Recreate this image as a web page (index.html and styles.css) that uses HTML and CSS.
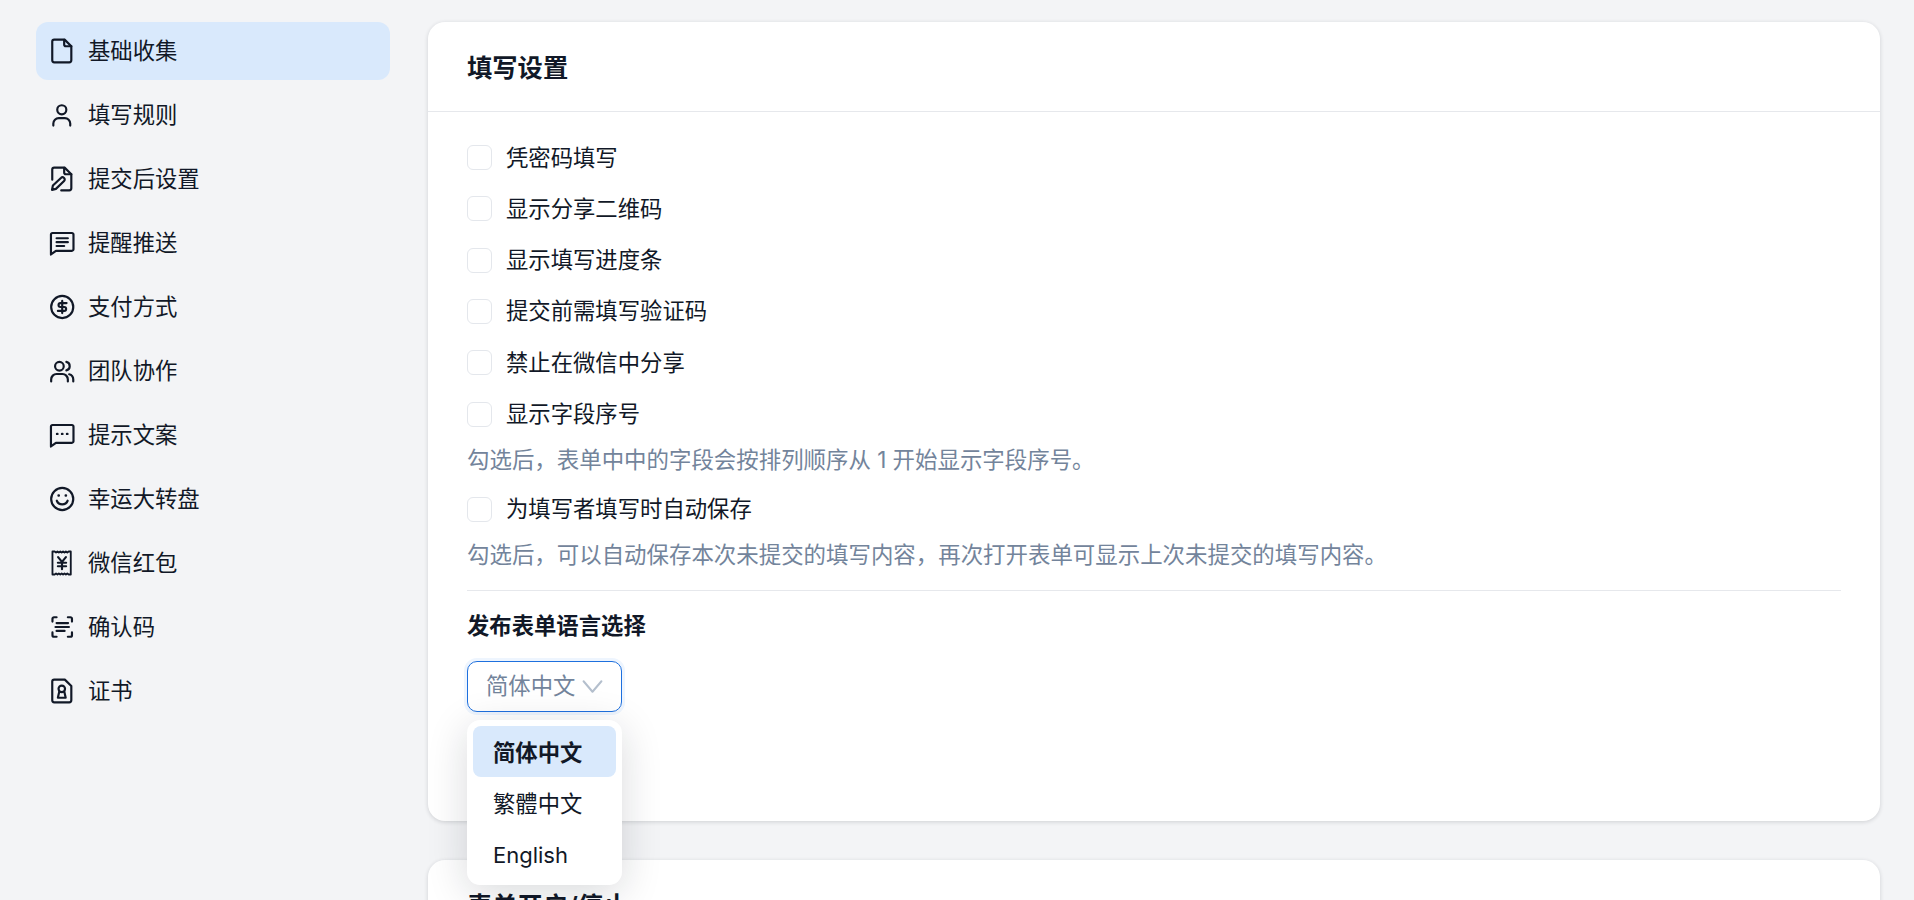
FILE: index.html
```html
<!DOCTYPE html>
<html lang="zh-CN">
<head>
<meta charset="utf-8">
<title>表单设置</title>
<link rel="stylesheet" href="styles.css">
</head>
<body>
<div class="page">
  <nav class="side">
    <a class="nav active"><svg class="ico" viewBox="0 0 24 24"><path d="M4.8 1.5h9.6l6.2 6.1v13a1.9 1.9 0 0 1-1.9 1.9H4.9A1.9 1.9 0 0 1 3 20.6V3.3a1.8 1.8 0 0 1 1.8-1.8z"/><path d="M14 1.7V6a1.6 1.6 0 0 0 1.6 1.6h5"/></svg><span class="txt">基础收集</span></a>
    <a class="nav"><svg class="ico" viewBox="0 0 24 24"><circle cx="11.8" cy="7.2" r="4.2"/><path d="M4 21.8v-1.9a5 5 0 0 1 5-5h5.6a5 5 0 0 1 5 5v1.9"/></svg><span class="txt">填写规则</span></a>
    <a class="nav"><svg class="ico" viewBox="0 0 24 24"><path d="M3 12.6V3.3a1.8 1.8 0 0 1 1.8-1.8h9.6l6.2 6.1v13a1.9 1.9 0 0 1-1.9 1.9h-7.4"/><path d="M14 1.7V6a1.6 1.6 0 0 0 1.6 1.6h5"/><path d="M3.6 18l7.4-7a2 2 0 0 1 2.9 2.9l-7.5 7.2-3.6.9z"/></svg><span class="txt">提交后设置</span></a>
    <a class="nav"><svg class="ico" viewBox="0 0 24 24"><path d="M1.8 4.2a1.4 1.4 0 0 1 1.4-1.4h18a1.4 1.4 0 0 1 1.4 1.4v13.6a1.4 1.4 0 0 1-1.4 1.4H6.4l-4.6 3.4z"/><path d="M7 7.6h10.4M7 11.2h10.4M7 14.8h7"/></svg><span class="txt">提醒推送</span></a>
    <a class="nav"><svg class="ico" viewBox="0 0 24 24"><circle cx="12.2" cy="12" r="10.2"/><path d="M16.2 8.4h-5.6a1.8 1.8 0 0 0 0 3.6h3.4a1.8 1.8 0 0 1 0 3.6H8.2M12.2 6.4v11.2"/></svg><span class="txt">支付方式</span></a>
    <a class="nav"><svg class="ico" viewBox="0 0 24 24"><circle cx="9.6" cy="7.6" r="4"/><path d="M2 21.6v-1.8a5 5 0 0 1 5-5h5.4a5 5 0 0 1 5 5v1.8"/><path d="M16 3.6a4 4 0 0 1 0 7.8M18.6 15a5 5 0 0 1 3.8 4.8v1.8"/></svg><span class="txt">团队协作</span></a>
    <a class="nav"><svg class="ico" viewBox="0 0 24 24"><path d="M1.8 4.2a1.4 1.4 0 0 1 1.4-1.4h18a1.4 1.4 0 0 1 1.4 1.4v13.6a1.4 1.4 0 0 1-1.4 1.4H6.4l-4.6 3.4z"/><path class="dot" d="M7.4 11h.4M12 11h.4M16.6 11h.4"/></svg><span class="txt">提示文案</span></a>
    <a class="nav"><svg class="ico" viewBox="0 0 24 24"><circle cx="12.2" cy="12" r="10.2"/><path d="M7.2 13.6a5.4 5.4 0 0 0 10 0"/><path class="dot" d="M8.8 8.8h.3M15.4 8.8h.3"/></svg><span class="txt">幸运大转盘</span></a>
    <a class="nav"><svg class="ico" viewBox="0 0 24 24"><path class="thin" d="M3.2 1.4h2l1.3 1 1.3-1 1.3 1 1.3-1 1.3 1 1.3-1 1.3 1 1.3-1 1.3 1 1.3-1h1.9v21.2h-1.9l-1.3-1-1.3 1-1.3-1-1.3 1-1.3-1-1.3 1-1.3-1-1.3 1-1.3-1-1.3 1h-2z"/><path d="M8.4 6.6l3.6 4.4 3.6-4.4M12 11v6.8M8.2 11.8h7.6M8.2 15h7.6"/></svg><span class="txt">微信红包</span></a>
    <a class="nav"><svg class="ico" viewBox="0 0 24 24"><path d="M7 3H4.6A1.4 1.4 0 0 0 3.2 4.4V7M17.4 3h2.4a1.4 1.4 0 0 1 1.4 1.4V7M7 21H4.6a1.4 1.4 0 0 1-1.4-1.4V17M17.4 21h2.4a1.4 1.4 0 0 0 1.4-1.4V17"/><path d="M7 8.4h10.6M6 12h12.4M7 15.6h7.4"/></svg><span class="txt">确认码</span></a>
    <a class="nav"><svg class="ico" viewBox="0 0 24 24"><path d="M4.8 1.5h9.8l6 5.9v13.2a1.9 1.9 0 0 1-1.9 1.9H4.9A1.9 1.9 0 0 1 3 20.6V3.3a1.8 1.8 0 0 1 1.8-1.8z"/><circle cx="11.8" cy="10" r="3"/><path d="M9.5 12.4l-1.3 5.8h7.2l-1.3-5.8"/></svg><span class="txt">证书</span></a>
  </nav>
  <main class="main">
    <section class="card first">
      <h2 class="card-title"><span class="txt">填写设置</span></h2>
      <div class="body">
        <label class="opt"><i class="box"></i><span class="txt">凭密码填写</span></label>
        <label class="opt"><i class="box"></i><span class="txt">显示分享二维码</span></label>
        <label class="opt"><i class="box"></i><span class="txt">显示填写进度条</span></label>
        <label class="opt"><i class="box"></i><span class="txt">提交前需填写验证码</span></label>
        <label class="opt"><i class="box"></i><span class="txt">禁止在微信中分享</span></label>
        <label class="opt"><i class="box"></i><span class="txt">显示字段序号</span></label>
        <p class="hint gap">勾选后，表单中中的字段会按排列顺序从 1 开始显示字段序号。</p>
        <label class="opt"><i class="box"></i><span class="txt">为填写者填写时自动保存</span></label>
        <p class="hint">勾选后，可以自动保存本次未提交的填写内容，再次打开表单可显示上次未提交的填写内容。</p>
        <hr class="rule">
        <h3 class="sub">发布表单语言选择</h3>
        <div class="select-wrap">
          <div class="select"><span class="txt">简体中文</span><svg class="chev" viewBox="0 0 20 14"><path d="M1.5 2l8.5 10 8.5-10"/></svg></div>
          <ul class="menu">
            <li class="on"><span class="txt">简体中文</span></li>
            <li><span class="txt">繁體中文</span></li>
            <li class="latin"><span class="txt">English</span></li>
          </ul>
        </div>
      </div>
    </section>
    <section class="card">
      <h2 class="card-title"><span class="txt">表单开启/停止</span></h2>
    </section>
  </main>
</div>
</body>
</html>
```
FILE: styles.css
```css
* { box-sizing: border-box; }
html, body { margin: 0; height: 100%; overflow: hidden; }
body {
  background: #f3f4f6;
  color: #111827;
  font-family: Inter, "Noto Sans CJK SC", "Noto Sans", sans-serif;
  font-size: 22.35px;
}
.txt { display: block; padding-bottom: 1px; line-height: 1.4; }
.page { display: flex; gap: 38px; padding: 22px 34px 0 36px; height: 900px; }
.side { width: 354px; flex: none; display: flex; flex-direction: column; gap: 6px; }
.nav {
  height: 58px; display: flex; align-items: center; gap: 13px;
  padding-left: 13px; border-radius: 12px;
}
.nav.active { background: #d9e9fc; }
.ico {
  width: 26px; height: 26px; flex: none; fill: none; stroke: #111827;
  stroke-width: 2; stroke-linecap: round; stroke-linejoin: round;
}
.ico .dot { stroke-width: 2.2; }
.ico .thin { stroke-width: 1.7; }
.main { flex: 1; min-width: 0; display: flex; flex-direction: column; gap: 39px; }
.card {
  background: #fff; border-radius: 17px;
  box-shadow: 0 1px 4px rgba(16, 24, 40, .16);
}
.card.first { height: 799px; flex: none; }
.card-title {
  margin: 0; padding: 0 39px; height: 90px; display: flex; align-items: center;
  font-size: 25.3px; font-weight: 600;
  border-bottom: 1.5px solid #e6e8ec;
}
.card-title .txt { padding: 2px 0 0; }
.body { padding: 20px 39px 0; }
.opt { height: 51.3px; display: flex; align-items: center; gap: 14px; }
.box {
  width: 25px; height: 25px; flex: none; background: #fff;
  border: 1.3px solid #e4e7ec; border-radius: 6px;
}
.hint { margin: 2px 0 0; color: #73849b; font-size: 22.44px; line-height: 36px; }
.hint.gap { margin-bottom: 6px; }
.rule { border: 0; border-top: 1.3px solid #e6e8ec; margin: 17px 0 0; }
.sub { margin: 0; padding-top: 18px; font-size: 22.35px; font-weight: 600; line-height: 34px; }
.select-wrap { position: relative; margin-top: 17.6px; width: 155px; }
.select {
  height: 51px; display: flex; align-items: center; gap: 7px; padding-left: 18px;
  border: 1.5px solid #1e70de; border-radius: 10px; color: #73849b;
  box-shadow: 0 0 0 3px #eef5fe; white-space: nowrap;
}
.chev { width: 21px; height: 15px; flex: none; fill: none; stroke: #b4bfcd; stroke-width: 1.9; stroke-linecap: round; stroke-linejoin: round; }
.menu {
  position: absolute; top: 59px; left: 0; width: 155px; height: 165px;
  margin: 0; padding: 6px; list-style: none; background: #fff; border-radius: 13px;
  box-shadow: 0 8px 40px rgba(16, 24, 40, .16);
}
.menu li { height: 51.3px; padding-left: 20px; display: flex; align-items: center; border-radius: 8px; }
.menu li .txt { padding: 2px 0 0; }
.menu li.on { background: #d9e9fc; font-weight: 600; }
.menu li.latin { font-size: 22px; }
```
